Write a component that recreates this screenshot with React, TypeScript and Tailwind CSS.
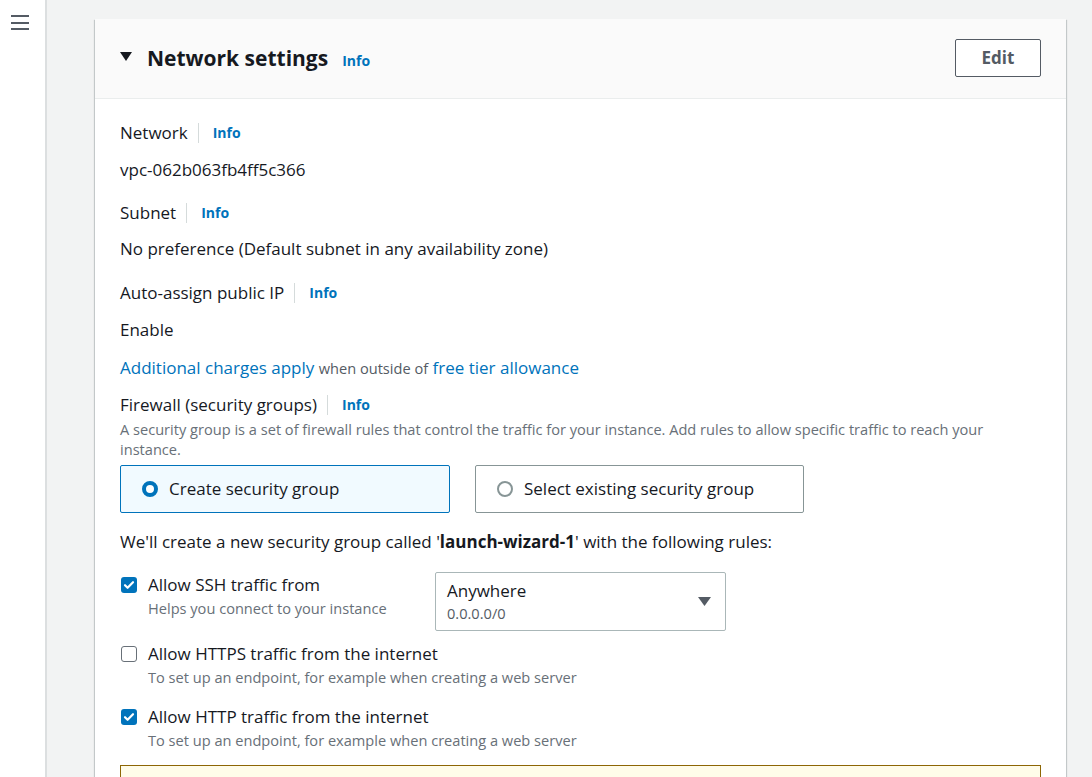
import { useState } from 'react';

const font = { fontFamily: '"Open Sans", "Noto Sans", Arial, sans-serif' };

function Info() {
  return (
    <span className="flex items-center">
      <span className="ml-[10px] h-[20px] w-px bg-[#d5dbdb]" />
      <a className="ml-[14px] text-[14px] font-bold text-[#0073bb] leading-[20px]">Info</a>
    </span>
  );
}

function Label({ children }: { children: React.ReactNode }) {
  return (
    <div className="flex items-center h-[24px] text-[17px] text-[#16191f]">
      <span>{children}</span>
      <Info />
    </div>
  );
}

function Checkbox({ checked }: { checked: boolean }) {
  return checked ? (
    <span className="flex h-[16px] w-[16px] shrink-0 items-center justify-center rounded-[3px] bg-[#0073bb]">
      <svg width="12" height="12" viewBox="0 0 12 12" fill="none">
        <path d="M2 6.2l2.6 2.6L10 3.2" stroke="#fff" strokeWidth="2.2" strokeLinecap="round" strokeLinejoin="round" />
      </svg>
    </span>
  ) : (
    <span className="h-[16px] w-[16px] shrink-0 rounded-[3px] border border-[#687078] bg-white" />
  );
}

function Rule({ checked, label, sub }: { checked: boolean; label: string; sub: string }) {
  return (
    <div>
      <div className="flex items-center h-[24px] gap-[11px] pl-px">
        <Checkbox checked={checked} />
        <span className="text-[17px] text-[#16191f]">{label}</span>
      </div>
      <div className="pl-[28px] text-[14.6px] leading-[20px] text-[#687078] mt-px">{sub}</div>
    </div>
  );
}

export default function App() {
  const [group, setGroup] = useState<'create' | 'existing'>('create');
  return (
    <div className="flex h-[777px] w-[1092px] overflow-hidden bg-[#f2f3f3]" style={font}>
      <aside className="w-[47px] shrink-0 border-r-2 border-[#dcdfe0] bg-white">
        <div className="ml-[11px] mt-[15px] flex w-[18px] flex-col gap-[4.5px]">
          <span className="h-[2px] bg-[#545b64]" />
          <span className="h-[2px] bg-[#545b64]" />
          <span className="h-[2px] bg-[#545b64]" />
        </div>
      </aside>
      <main className="flex-1 pl-[48px] pt-[19px] pr-[26px]">
        <section className="bg-white shadow-[0_1px_1px_0_rgba(0,28,36,0.3),1px_1px_1px_0_rgba(0,28,36,0.15),-1px_1px_1px_0_rgba(0,28,36,0.15)]">
          <header className="flex h-[80px] items-center justify-between border-b border-[#eaeded] bg-[#fafafa] px-[25px]">
            <div className="flex items-center">
              <svg width="12" height="10" viewBox="0 0 12 10" className="mt-[-4px]">
                <path d="M0 0h12L6 9z" fill="#16191f" />
              </svg>
              <h2 className="ml-[15px] text-[21px] font-bold text-[#16191f]">Network settings</h2>
              <a className="ml-[14px] mt-[4px] text-[14px] font-bold text-[#0073bb]">Info</a>
            </div>
            <button className="mt-[-2px] h-[38px] w-[86px] rounded-[2px] border border-[#545b64] bg-white text-[17px] font-bold text-[#545b64]">
              Edit
            </button>
          </header>

          <div className="px-[25px] pt-[22px] pb-[20px]">
            <Label>Network</Label>
            <div className="mt-[12px] h-[24px] text-[17px] text-[#16191f]">vpc-062b063fb4ff5c366</div>

            <div className="mt-[20px]"><Label>Subnet</Label></div>
            <div className="mt-[11px] h-[24px] text-[17px] text-[#16191f]">No preference (Default subnet in any availability zone)</div>

            <div className="mt-[21px]"><Label>Auto-assign public IP</Label></div>
            <div className="mt-[12px] h-[24px] text-[17px] text-[#16191f]">Enable</div>

            <div className="mt-[14px] h-[24px] text-[17px] text-[#0073bb]">
              Additional charges apply <span className="text-[14.6px] text-[#545b64]">when outside of</span> free tier allowance
            </div>

            <div className="mt-[14px]"><Label>Firewall (security groups)</Label></div>
            <p className="mt-[2px] pr-[40px] text-[14.6px] leading-[20px] text-[#687078]">
              A security group is a set of firewall rules that control the traffic for your instance. Add rules to allow specific traffic to reach your instance.
            </p>

            <div className="mt-[6px] flex gap-[25px]">
              <button
                onClick={() => setGroup('create')}
                className={`flex h-[48px] w-[330px] items-center gap-[11px] rounded-[2px] border pl-[21px] text-[17px] text-[#16191f] ${group === 'create' ? 'border-[#0073bb] bg-[#f1faff]' : 'border-[#879596] bg-white'}`}
              >
                <span className={`h-[16px] w-[16px] rounded-full ${group === 'create' ? 'border-[4px] border-[#0073bb] bg-white' : 'border-2 border-[#879596]'}`} />
                Create security group
              </button>
              <button
                onClick={() => setGroup('existing')}
                className={`flex h-[48px] w-[329px] items-center gap-[11px] rounded-[2px] border pl-[21px] text-[17px] text-[#16191f] ${group === 'existing' ? 'border-[#0073bb] bg-[#f1faff]' : 'border-[#879596] bg-white'}`}
              >
                <span className={`h-[16px] w-[16px] rounded-full ${group === 'existing' ? 'border-[4px] border-[#0073bb] bg-white' : 'border-2 border-[#879596]'}`} />
                Select existing security group
              </button>
            </div>

            <div className="mt-[16px] h-[24px] text-[17px] text-[#16191f]">
              We'll create a new security group called '<b>launch-wizard-1</b>' with the following rules:
            </div>

            <div className="mt-[20px] flex">
              <div className="w-[315px]">
                <Rule checked label="Allow SSH traffic from" sub="Helps you connect to your instance" />
              </div>
              <div className="mt-[-1px] flex h-[59px] w-[291px] items-start justify-between rounded-[2px] border border-[#aab7b8] pl-[11px] pr-[14px] pt-[6px]">
                <div>
                  <div className="text-[17px] leading-[24px] text-[#16191f]">Anywhere</div>
                  <div className="text-[14.6px] leading-[20px] text-[#545b64]">0.0.0.0/0</div>
                </div>
                <svg width="13" height="9" viewBox="0 0 13 9" className="mt-[18px]">
                  <path d="M0 0h13L6.5 9z" fill="#545b64" />
                </svg>
              </div>
            </div>

            <div className="mt-[11px]">
              <Rule checked={false} label="Allow HTTPS traffic from the internet" sub="To set up an endpoint, for example when creating a web server" />
            </div>
            <div className="mt-[18px]">
              <Rule checked label="Allow HTTP traffic from the internet" sub="To set up an endpoint, for example when creating a web server" />
            </div>

            <div className="mt-[15px] h-[80px] border border-[#8d6605] bg-[#fffce9]" />
          </div>
        </section>
      </main>
    </div>
  );
}
